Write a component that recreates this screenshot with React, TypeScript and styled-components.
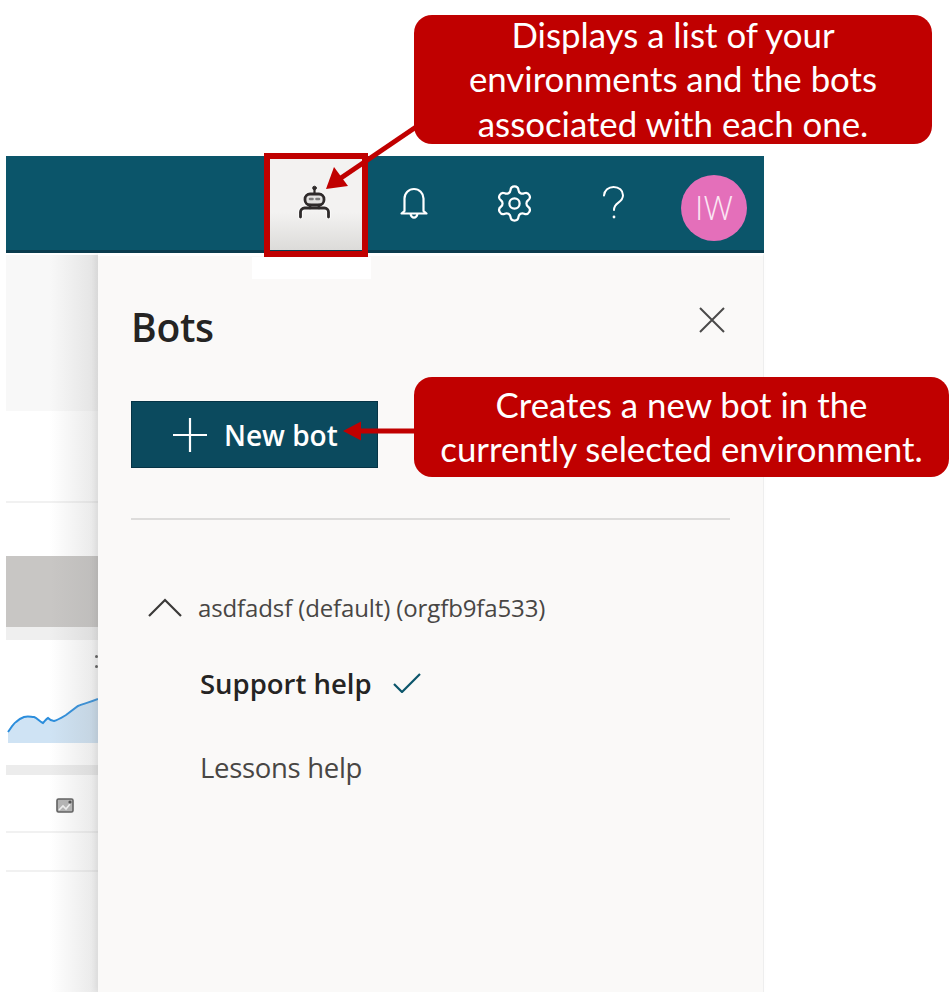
import styled, { createGlobalStyle } from "styled-components";
import { Settings } from "lucide-react";

const GlobalStyle = createGlobalStyle`
  html, body {
    margin: 0;
    padding: 0;
    background: #ffffff;
  }
  * {
    box-sizing: border-box;
  }
`;

const panelFont = `"Open Sans", "Noto Sans", sans-serif`;

const App = () => {
  return (
    <Page>
      <GlobalStyle />
      <Frame>
        <Header>
          <BotTile>
            <RobotIcon />
            <TileHighlight />
            <TileGap />
          </BotTile>
          <HeaderButton>
            <BellIcon />
          </HeaderButton>
          <HeaderButton>
            <Settings size={41} strokeWidth={1.3} color="#ffffff" />
          </HeaderButton>
          <HeaderButton>
            <HelpIcon />
          </HeaderButton>
          <AvatarSlot>
            <Avatar>IW</Avatar>
          </AvatarSlot>
        </Header>

        <Body>
          <BackgroundStrip>
            <StripBlock $height={156} $bg="#f8f8f8" />
            <StripBlock $height={92} $bg="#ffffff" $line />
            <StripBlock $height={53} $bg="#ffffff" />
            <StripBlock $height={71} $bg="#c8c6c4" />
            <StripBlock $height={13} $bg="#efefef" />
            <ChartBlock>
              <MoreDots />
              <TrendChart />
            </ChartBlock>
            <StripBlock $height={10} $bg="#ececec" />
            <IconRow>
              <ImageIcon />
            </IconRow>
            <StripBlock $height={20} $bg="#ffffff" $line />
            <StripBlock $height={39} $bg="#ffffff" $line />
            <StripBlock $height={120} $bg="#ffffff" />
            <StripFade />
          </BackgroundStrip>

          <Panel>
            <PanelTop>
              <PanelTitle>Bots</PanelTitle>
              <CloseSvg width="26" height="26" viewBox="0 0 26 26" fill="none" stroke="#4a4a4a" strokeWidth="2">
                <path d="M1 1l24 24M25 1L1 25" />
              </CloseSvg>
            </PanelTop>
            <NewBotButton>
              <PlusIcon />
              New bot
            </NewBotButton>
            <Divider />
            <EnvironmentRow>
              <ChevronIcon />
              <EnvironmentName>asdfadsf (default) (orgfb9fa533)</EnvironmentName>
            </EnvironmentRow>
            <BotRow $selected>
              Support help
              <CheckIcon />
            </BotRow>
            <BotRow>Lessons help</BotRow>
          </Panel>
        </Body>
      </Frame>

      <Callout $left={414} $top={15} $width={518} $height={129}>
        <span>Displays a list of your</span>
        <span>environments and the bots</span>
        <span>associated with each one.</span>
      </Callout>
      <Callout $left={414} $top={377} $width={535} $height={100}>
        <span>Creates a new bot in the</span>
        <span>currently selected environment.</span>
      </Callout>
      <ArrowLayer />
    </Page>
  );
};
export default App;

const RobotIcon = () => (
  <svg width="36" height="38" viewBox="0 0 36 38" fill="none">
    <g stroke="#ffffff" strokeWidth="4.5" strokeLinecap="round" strokeLinejoin="round" opacity="0.9">
      <rect x="7" y="10" width="19" height="11" rx="5" />
      <path d="M2.5 33v-5a4 4 0 0 1 4-4h20a4 4 0 0 1 4 4v5" />
    </g>
    <g stroke="#2f2b2b" strokeLinecap="round" strokeLinejoin="round">
      <circle cx="16.5" cy="4" r="1.8" fill="#2f2b2b" strokeWidth="1" />
      <path d="M16.5 5v5" strokeWidth="2.2" />
      <rect x="7" y="10" width="19" height="11" rx="5" fill="#e4e3e2" strokeWidth="2.8" />
      <path d="M12 15h2.500M18.500 15H21" stroke="#7d7d7d" strokeWidth="2.6" />
      <path d="M2.500 33v-5a4 4 0 0 1 4-4h20a4 4 0 0 1 4 4v5" strokeWidth="2.800" />
      <path d="M12 21v3M21 21v3" strokeWidth="2.600" />
    </g>
  </svg>
);

const BellIcon = () => (
  <svg width="30" height="34" viewBox="0 0 30 34" fill="none" stroke="#ffffff" strokeWidth="2.2" strokeLinejoin="round">
    <path d="M5.500 25V12.500a9.500 9.500 0 0 1 19 0V25l3 2.500H2.500z" />
    <path d="M11.500 28c.6 2.400 1.800 3.600 3.500 3.600s2.900-1.200 3.500-3.600" />
  </svg>
);

const HelpIcon = () => (
  <svg width="26" height="36" viewBox="0 0 26 36" fill="none" stroke="#ffffff" strokeWidth="2" strokeLinecap="round">
    <path d="M3 10.500C3.400 5.200 7.500 2 12.600 2c5.400 0 9.400 3.400 9.400 8.200 0 3.600-2 5.500-4.600 7.400-2.800 2-4.400 3.700-4.400 7.400" />
    <circle cx="13" cy="32" r="1.400" fill="#ffffff" stroke="none" />
  </svg>
);

const MoreDots = () => (
  <DotsWrap>
    <Dot />
    <Dot />
  </DotsWrap>
);

const TrendChart = () => (
  <ChartSvg width="92" height="56" viewBox="0 0 92 56" fill="none">
    <path
      d="M2 40 C5 36 7 32 10 30 C13 27 15 26 18 25 C22 24 25 25 28 25 C31 26 33 29 37 31 C39 29 40 27 42 26 C44 28 46 29 48 29 C52 28 55 26 60 23 C64 20 68 17 72 14 C77 12 84 10 92 7 V51 H2 Z"
      fill="#cfe3f4"
    />
    <path
      d="M2 40 C5 36 7 32 10 30 C13 27 15 26 18 25 C22 24 25 25 28 25 C31 26 33 29 37 31 C39 29 40 27 42 26 C44 28 46 29 48 29 C52 28 55 26 60 23 C64 20 68 17 72 14 C77 12 84 10 92 7"
      stroke="#2b8ddc"
      strokeWidth="2"
    />
  </ChartSvg>
);

const ImageIcon = () => (
  <svg width="18" height="15" viewBox="0 0 18 15" fill="none">
    <rect x="1" y="1" width="16" height="13" rx="1.500" fill="#b5b5b5" stroke="#5e5e5e" strokeWidth="1.600" />
    <path d="M3 12l4-4 3 3 4-5" stroke="#f2f2f2" strokeWidth="1.600" />
    <circle cx="14" cy="4" r="1.600" fill="#4a4a4a" />
  </svg>
);

const PlusIcon = () => (
  <svg width="34" height="34" viewBox="0 0 34 34" fill="none" stroke="#ffffff" strokeWidth="2.200">
    <path d="M17 0v34M0 17h34" />
  </svg>
);

const ChevronIcon = () => (
  <svg width="34" height="19" viewBox="0 0 34 19" fill="none" stroke="#3b3a39" strokeWidth="2.200">
    <path d="M1 18L17 2l16 16" />
  </svg>
);

const CheckIcon = () => (
  <svg width="28" height="20" viewBox="0 0 28 20" fill="none" stroke="#0b556a" strokeWidth="2.200">
    <path d="M1 11l8 8L27 1" />
  </svg>
);

const ArrowLayer = () => (
  <ArrowSvg width="949" height="992" viewBox="0 0 949 992" fill="none">
    <path d="M416 127L338 180" stroke="#c00000" strokeWidth="5" />
    <path d="M326 189L334 167L348 186Z" fill="#c00000" />
    <path d="M414 431H358" stroke="#c00000" strokeWidth="5" />
    <path d="M343 431L361 421.500V440.500Z" fill="#c00000" />
  </ArrowSvg>
);

const Page = styled.main`
  position: relative;
  width: 949px;
  height: 992px;
  padding: 156px 0 0 6px;
  overflow: hidden;
  background: #ffffff;
`;

const Frame = styled.div`
  width: 758px;
  height: 836px;
  display: flex;
  flex-direction: column;
`;

const Header = styled.header`
  height: 97px;
  flex-shrink: 0;
  position: relative;
  z-index: 2;
  display: flex;
  justify-content: flex-end;
  background: #0b556a;
  border-bottom: 3px solid #0a3c4e;
`;

const BotTile = styled.div`
  position: relative;
  width: 100px;
  display: flex;
  align-items: center;
  justify-content: center;
  padding-left: 4px;
  background: linear-gradient(#f3f2f1 60%, #dcdbd9);
`;

const TileHighlight = styled.div`
  position: absolute;
  top: -3px;
  left: 0;
  right: -4px;
  bottom: -7px;
  z-index: 1;
  border: 6px solid #c00000;
`;

const TileGap = styled.div`
  position: absolute;
  top: 101px;
  left: -12px;
  width: 119px;
  height: 22px;
  background: #ffffff;
`;

const HeaderButton = styled.div`
  width: 100px;
  display: flex;
  align-items: center;
  justify-content: center;
`;

const AvatarSlot = styled.div`
  width: 100px;
  display: flex;
  align-items: center;
  justify-content: center;
  padding-top: 9px;
`;

const Avatar = styled.div`
  width: 66px;
  height: 66px;
  border-radius: 50%;
  display: flex;
  align-items: center;
  justify-content: center;
  background: #e46fba;
  color: #fbe6f3;
  font-family: ${panelFont};
  font-size: 33px;
  font-weight: 300;
`;

const Body = styled.div`
  flex: 1;
  display: flex;
  min-height: 0;
`;

const BackgroundStrip = styled.div`
  position: relative;
  width: 92px;
  flex-shrink: 0;
  overflow: hidden;
  padding-top: 2px;
  display: flex;
  flex-direction: column;
`;

const StripBlock = styled.div<{ $height: number; $bg: string; $line?: boolean }>`
  height: ${(props) => props.$height}px;
  flex-shrink: 0;
  background: ${(props) => props.$bg};
  border-bottom: ${(props) => (props.$line ? "2px solid #f1f1f1" : "none")};
`;

const StripFade = styled.div`
  position: absolute;
  top: 2px;
  bottom: 0;
  right: 0;
  width: 48px;
  background: linear-gradient(to right, rgba(160, 160, 160, 0), rgba(160, 160, 160, 0.24));
`;

const ChartBlock = styled.div`
  position: relative;
  height: 125px;
  flex-shrink: 0;
  background: #ffffff;
  display: flex;
  align-items: flex-end;
`;

const ChartSvg = styled.svg`
  display: block;
  margin-bottom: 17px;
`;

const DotsWrap = styled.div`
  position: absolute;
  top: 15px;
  right: 0;
  display: flex;
  flex-direction: column;
  gap: 7px;
`;

const Dot = styled.div`
  width: 3px;
  height: 3px;
  border-radius: 50%;
  background: #555555;
`;

const IconRow = styled.div`
  height: 38px;
  flex-shrink: 0;
  display: flex;
  justify-content: flex-end;
  align-items: flex-end;
  padding-right: 24px;
  background: #ffffff;
`;

const Panel = styled.section`
  flex: 1;
  padding: 0 33px 0 33px;
  position: relative;
  background: #faf9f8;
  border-top: 3px solid #ffffff;
  border-right: 1px solid #eeeeee;
  font-family: ${panelFont};
  box-shadow: -3px 0 6px rgba(0, 0, 0, 0.06);
`;

const PanelTop = styled.div`
  height: 145px;
  display: flex;
  align-items: flex-start;
  justify-content: space-between;
  padding: 48px 5px 0 0;
`;

const PanelTitle = styled.h2`
  margin: 0;
  color: #252423;
  font-family: ${panelFont};
  font-size: 39px;
  font-weight: 600;
  line-height: 46px;
  letter-spacing: -0.3px;
`;

const CloseSvg = styled.svg`
  display: block;
  margin-top: 3px;
`;

const NewBotButton = styled.div`
  width: 247px;
  height: 67px;
  display: flex;
  align-items: center;
  gap: 17px;
  padding-left: 41px;
  background: #0b4a5e;
  border: 1px solid #063446;
  color: #ffffff;
  font-size: 28px;
  font-weight: 600;
`;

const Divider = styled.div`
  height: 2px;
  margin-top: 50px;
  background: #dddcdb;
`;

const EnvironmentRow = styled.div`
  height: 40px;
  margin-top: 67px;
  margin-bottom: 14px;
  padding-left: 17px;
  display: flex;
  align-items: center;
  gap: 16px;
`;

const EnvironmentName = styled.span`
  color: #484644;
  font-size: 24px;
  letter-spacing: -0.12px;
`;

const BotRow = styled.div<{ $selected?: boolean }>`
  height: 84px;
  padding-left: 69px;
  display: flex;
  align-items: center;
  gap: 21px;
  color: ${(props) => (props.$selected ? "#252423" : "#484644")};
  font-size: 27.500px;
  font-weight: ${(props) => (props.$selected ? 600 : 400)};
  letter-spacing: ${(props) => (props.$selected ? "0" : "-0.3px")};
`;

const Callout = styled.div<{ $left: number; $top: number; $width: number; $height: number }>`
  position: absolute;
  z-index: 3;
  left: ${(props) => props.$left}px;
  top: ${(props) => props.$top}px;
  width: ${(props) => props.$width}px;
  height: ${(props) => props.$height}px;
  display: flex;
  flex-direction: column;
  align-items: center;
  justify-content: center;
  border-radius: 18px;
  background: #c00000;
  color: #ffffff;
  font-family: Lato, "Open Sans", sans-serif;
  font-size: 34.800px;
  line-height: 44.500px;
  white-space: nowrap;
`;

const ArrowSvg = styled.svg`
  position: absolute;
  z-index: 4;
  top: 0;
  left: 0;
  pointer-events: none;
`;
